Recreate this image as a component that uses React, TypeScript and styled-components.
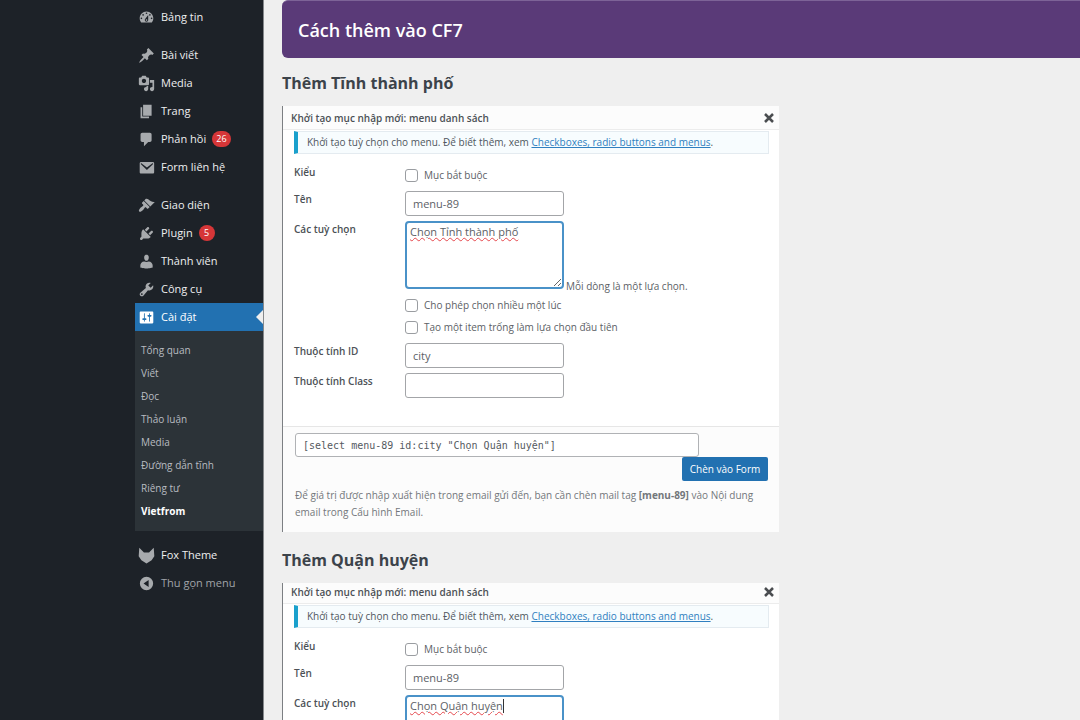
import React, { useId } from "react";
import styled, { createGlobalStyle, css } from "styled-components";

const GlobalStyle = createGlobalStyle`
  *, *::before, *::after { box-sizing: border-box; }
  body {
    margin: 0;
    background: #efefef;
    color: #50575e;
    font-family: "Open Sans", "Noto Sans", sans-serif;
    font-size: 10px;
    line-height: 16px;
  }
  h1, h2, h3, p, ul { margin: 0; padding: 0; }
  ul { list-style: none; }
`;

const Page = styled.div`
  display: flex;
  height: 100vh;
`;

/* ---------- Sidebar ---------- */

const Sidebar = styled.aside`
  flex: none;
  width: 264px;
  padding: 3px 0 0 135px;
  background: #1d2228;
  border-right: 1px solid #85888b;
`;

const Menu = styled.nav`
  display: flex;
  flex-direction: column;
  gap: 10px;
`;

const MenuLink = styled.a<{ $active?: boolean }>`
  position: relative;
  display: flex;
  align-items: center;
  gap: 6px;
  height: 28px;
  padding-left: 3px;
  color: #eeeff0;
  font-size: 11px;
  text-decoration: none;

  svg {
    flex: none;
    width: 17px;
    height: 17px;
    fill: #a7aaad;
  }

  ${(p) =>
    p.$active &&
    css`
      background: #2271b1;
      color: #fff;
      svg { fill: #fff; }
      &::after {
        content: "";
        position: absolute;
        right: 0;
        top: 7px;
        border: 7px solid transparent;
        border-left-width: 0;
        border-right-color: #efefef;
      }
    `}
`;

const CollapseButton = styled.button`
  display: flex;
  align-items: center;
  gap: 6px;
  width: 100%;
  height: 28px;
  padding: 0 0 0 3px;
  border: 0;
  background: none;
  color: #a0a4a8;
  font: inherit;
  font-size: 11px;

  svg {
    width: 17px;
    height: 17px;
    fill: #a7aaad;
  }
`;

const Badge = styled.span`
  min-width: 16px;
  height: 16px;
  padding: 0 4px;
  border-radius: 8px;
  background: #d63638;
  color: #fff;
  font-size: 9px;
  line-height: 16px;
  text-align: center;
`;

const Submenu = styled.ul`
  padding: 8px 0;
  background: #2c3338;
`;

const SubLink = styled.a<{ $current?: boolean }>`
  display: block;
  padding-left: 6px;
  color: ${(p) => (p.$current ? "#fff" : "#b8bcc0")};
  font-weight: ${(p) => (p.$current ? 700 : 400)};
  line-height: 23px;
  text-decoration: none;
`;

/* ---------- Content ---------- */

const Main = styled.main`
  flex: 1;
  min-width: 0;
  padding: 0 0 20px 18px;
  overflow-y: auto;
  scrollbar-width: none;
`;

const Banner = styled.header`
  padding: 16px 16px 14px;
  border-top: 1px solid #7d6397;
  border-radius: 6px 0 0 6px;
  background: #5a3a78;
`;

const BannerTitle = styled.h1`
  color: #fff;
  font-size: 18px;
  font-weight: 600;
  line-height: 27px;
`;

const Section = styled.section<{ $spaced?: boolean }>`
  display: flex;
  flex-direction: column;
  gap: 11px;
  max-width: 497px;
  padding-top: ${(p) => (p.$spaced ? 16 : 13)}px;
`;

const SectionTitle = styled.h2`
  color: #3c434a;
  font-size: 16px;
  font-weight: 700;
  line-height: 24px;
`;

const Panel = styled.div`
  border-left: 1px solid #7c7f83;
  background: #fff;
`;

const PanelHeader = styled.div<{ $compact?: boolean }>`
  display: flex;
  align-items: center;
  justify-content: space-between;
  height: ${(p) => (p.$compact ? 21 : 24)}px;
  padding: ${(p) => (p.$compact ? "0 5px 2px 8px" : "0 5px 0 8px")};
  border-bottom: 1px solid #ececec;
  background: #fcfcfc;
`;

const PanelTitle = styled.h3`
  color: #4c5156;
  font-size: 10px;
  font-weight: 600;
`;

const CloseButton = styled.button`
  display: flex;
  padding: 0;
  border: 0;
  background: none;

  svg {
    width: 10px;
    height: 10px;
    stroke: #4a4d50;
    stroke-width: 2.5;
  }
`;

const Notice = styled.p`
  margin: 1px 10px 0 11px;
  padding: 2px 9px;
  border: 1px solid #e4ebf0;
  border-left: 4px solid #1aa0cc;
  background: #f7fcfe;
  line-height: 17px;

  a { color: #2f7fc0; }
`;

const Fields = styled.div`
  display: flex;
  flex-direction: column;
  gap: 5px;
  padding: 10px 10px 28px 11px;
`;

const Field = styled.div`
  display: grid;
  grid-template-columns: 111px 1fr;
`;

const fieldLabel = css`
  color: #4c5156;
  font-weight: 600;
`;

const FieldLabel = styled.label`
  ${fieldLabel}
`;

const FieldCaption = styled.span`
  ${fieldLabel}
`;

const TextInput = styled.input`
  width: 159px;
  height: 25px;
  padding: 0 7px;
  border: 1px solid #a3a5a8;
  border-radius: 3px;
  background: #fff;
  color: #5c6166;
  font: inherit;
  font-size: 11px;
`;

const TextAreaLine = styled.div`
  display: flex;
  align-items: flex-end;
  gap: 2px;
  height: 73px;
`;

const TextAreaBox = styled.div`
  position: relative;
  align-self: flex-start;
`;

const TextArea = styled.textarea`
  display: block;
  width: 159px;
  height: 68px;
  padding: 1px 3px;
  border: 2px solid #4a92c8;
  border-radius: 4px;
  color: #5c6166;
  font: inherit;
  font-size: 11px;
  text-decoration: underline wavy 1px #e5484d;
  resize: both;
  outline: 0;
`;

const Caret = styled.span`
  position: absolute;
  top: 4px;
  left: 98px;
  width: 1px;
  height: 14px;
  background: #333;
`;

const Hint = styled.span`
  color: #5c6166;
`;

const CheckLabel = styled.label`
  display: flex;
  align-items: center;
  gap: 6px;
  height: 22px;
  color: #5c6166;
`;

const Checkbox = styled.input`
  appearance: none;
  width: 13px;
  height: 13px;
  margin: 0;
  border: 1px solid #9a9da1;
  border-radius: 3px;
  background: #fff;
`;

const PanelFooter = styled.div`
  display: flex;
  flex-direction: column;
  align-items: flex-start;
  padding: 6px 11px 11px 12px;
  border-top: 1px solid #e6e6e6;
  background: #fcfcfc;
`;

const TagInput = styled(TextInput)`
  width: 404px;
  max-width: 100%;
  height: 24px;
  border-color: #b0b2b5;
  color: #555a5f;
  font-family: "DejaVu Sans Mono", monospace;
  font-size: 10px;
`;

const InsertButton = styled.button`
  align-self: flex-end;
  width: 86px;
  height: 24px;
  padding: 0;
  border: 0;
  border-radius: 2px;
  background: #2271b1;
  color: #fff;
  font: inherit;
  white-space: nowrap;
`;

const MailNote = styled.p`
  padding-top: 6px;
  color: #73777b;
  line-height: 17px;
`;

/* ---------- Data ---------- */

const icons = {
  dashboard:
    "M3.76 16h12.48c1.1-1.37 1.76-3.11 1.76-5 0-4.42-3.58-8-8-8s-8 3.58-8 8c0 1.89.66 3.63 1.76 5zM10 4c.55 0 1 .45 1 1s-.45 1-1 1-1-.45-1-1 .45-1 1-1zM6 6c.55 0 1 .45 1 1s-.45 1-1 1-1-.45-1-1 .45-1 1-1zm8 0c.55 0 1 .45 1 1s-.45 1-1 1-1-.45-1-1 .45-1 1-1zm-5.37 5.55L12 7v6c0 1.1-.9 2-2 2s-2-.9-2-2c0-.57.24-1.08.63-1.45zM4 10c.55 0 1 .45 1 1s-.45 1-1 1-1-.45-1-1 .45-1 1-1zm12 0c.55 0 1 .45 1 1s-.45 1-1 1-1-.45-1-1 .45-1 1-1zm-5 3c0-.55-.45-1-1-1s-1 .45-1 1 .45 1 1 1 1-.45 1-1z",
  post: "M10.44 3.02l1.82-1.82 6.36 6.35-1.83 1.82c-1.05-.68-2.48-.57-3.41.36l-.75.75c-.92.93-1.04 2.35-.35 3.41l-1.83 1.82-2.41-2.41-2.8 2.79c-.42.42-3.38 2.71-3.8 2.29s1.86-3.39 2.28-3.81l2.79-2.79L4.1 9.36l1.83-1.82c1.05.69 2.48.57 3.4-.36l.75-.75c.93-.92 1.05-2.35.36-3.41z",
  media:
    "M13 11V4c0-.55-.45-1-1-1h-1.67L9 1H5L3.67 3H2c-.55 0-1 .45-1 1v7c0 .55.45 1 1 1h10c.55 0 1-.45 1-1zM7 4.5c1.38 0 2.5 1.12 2.5 2.5S8.38 9.5 7 9.5 4.5 8.38 4.5 7 5.62 4.5 7 4.5zM14 6h5v10.5c0 1.38-1.12 2.5-2.5 2.5S14 17.88 14 16.5s1.12-2.5 2.5-2.5c.17 0 .34.02.5.05V9h-3V6zm-4 8.05V13h2v3.5c0 1.38-1.12 2.5-2.5 2.5S7 17.88 7 16.5 8.12 14 9.5 14c.17 0 .34.02.5.05z",
  page: "M6 15V2h10v13H6zm-1 1h8v2H3V5h2v11z",
  comments:
    "M5 2h9c1.1 0 2 .9 2 2v7c0 1.1-.9 2-2 2h-2l-5 5v-5H5c-1.1 0-2-.9-2-2V4c0-1.1.9-2 2-2z",
  email:
    "M3.5 3.5h14c.8 0 1.5.7 1.500 1.500v10.500c0 .8-.7 1.500-1.500 1.500h-14c-.8 0-1.500-.7-1.500-1.500V5c0-.8.7-1.500 1.500-1.500zM4.300 5.200c-.6-.4-1.400.5-.8 1l7 6.600 7-6.600c.6-.5-.2-1.400-.8-1l-6.200 4.800z",
  appearance:
    "M14.48 11.06L7.41 3.99l1.5-1.5c.5-.56 2.3-.47 3.51.32 1.21.8 1.43 1.28 2.91 2.1 1.18.64 2.45 1.26 4.45.85zm-.71.71L6.7 4.7 4.93 6.47c-.39.39-.39 1.02 0 1.41l1.06 1.06c.39.39.39 1.03 0 1.42-.6.6-1.43 1.11-2.21 1.69-.35.26-.7.53-1.01.84C1.43 14.23.4 16.08 1.4 17.07c.99 1 2.84-.03 4.18-1.36.31-.31.58-.66.85-1.02.57-.78 1.08-1.61 1.69-2.21.39-.39 1.02-.39 1.41 0l1.06 1.06c.39.39 1.02.39 1.41 0z",
  plugins:
    "M13.11 4.36L9.87 7.6 8 5.73l3.24-3.24c.35-.34 1.05-.2 1.56.32.52.51.66 1.21.31 1.55zm-8 1.77l.91-1.12 9.01 9.01-1.19.84c-.71.71-2.63 1.16-3.82 1.16H6.14L4.9 17.26c-.59.59-1.54.59-2.12 0-.59-.58-.59-1.53 0-2.12l1.24-1.24v-3.88c0-1.13.4-3.19 1.09-3.89zm7.26 3.97l3.24-3.24c.34-.35 1.04-.21 1.55.31.52.51.66 1.21.31 1.55l-3.24 3.25z",
  users:
    "M10 9.25c-2.27 0-2.73-3.44-2.73-3.44C7 4.02 7.82 2 9.97 2c2.16 0 2.98 2.02 2.71 3.81 0 0-.41 3.44-2.68 3.44zM7.23 9.97L10 10.600L12.72 9.97c2.39 0 4.52 2.33 4.52 4.53v2.49s-3.65 1.13-7.24 1.13c-3.65 0-7.24-1.13-7.24-1.13v-2.49c0-2.25 1.94-4.48 4.47-4.53z",
  tools:
    "M16.68 9.77c-1.34 1.34-3.3 1.67-4.95.99l-5.41 6.52c-.99.99-2.59.99-3.58 0s-.99-2.59 0-3.57l6.52-5.42c-.68-1.65-.35-3.61.99-4.95 1.28-1.28 3.12-1.62 4.72-1.06l-2.89 2.89 2.82 2.82 2.86-2.87c.53 1.58.18 3.39-1.08 4.65zM3.81 16.21c.4.39 1.04.39 1.43 0 .4-.4.4-1.04 0-1.43-.39-.4-1.03-.4-1.43 0-.39.39-.39 1.03 0 1.43z",
  settings:
    "M18 16V4c0-.55-.45-1-1-1H3c-.55 0-1 .45-1 1v12c0 .55.45 1 1 1h14c.55 0 1-.45 1-1zM8 11h1c.55 0 1 .45 1 1s-.45 1-1 1H8v1.5c0 .28-.22.5-.5.5s-.5-.22-.5-.5V13H6c-.55 0-1-.45-1-1s.45-1 1-1h1V5.5c0-.28.22-.5.5-.5s.5.22.5.5V11zm5-2h-1c-.55 0-1-.45-1-1s.45-1 1-1h1V5.5c0-.28.22-.5.5-.5s.5.22.5.5V7h1c.55 0 1 .45 1 1s-.45 1-1 1h-1v5.5c0 .28-.22.5-.5.5s-.5-.22-.5-.5V9z",
  fox: "M1.500 1L7 6.500h6L18.500 1l.7 10-3.200 4.500L10 19.500l-6-4L.8 11z",
  collapse:
    "M10 2.200a7.800 7.800 0 1 0 0 15.600a7.800 7.800 0 1 0 0-15.600zM12.500 6v8L6.500 10z",
};

type IconName = keyof typeof icons;

const Icon = ({ name }: { name: IconName }) => (
  <svg viewBox="0 0 20 20" fillRule="evenodd" aria-hidden="true">
    <path d={icons[name]} />
  </svg>
);

type Item = { icon: IconName; label: string; count?: number; active?: boolean };

const home: Item[] = [{ icon: "dashboard", label: "Bảng tin" }];
const content: Item[] = [
  { icon: "post", label: "Bài viết" },
  { icon: "media", label: "Media" },
  { icon: "page", label: "Trang" },
  { icon: "comments", label: "Phản hồi", count: 26 },
  { icon: "email", label: "Form liên hệ" },
];
const admin: Item[] = [
  { icon: "appearance", label: "Giao diện" },
  { icon: "plugins", label: "Plugin", count: 5 },
  { icon: "users", label: "Thành viên" },
  { icon: "tools", label: "Công cụ" },
  { icon: "settings", label: "Cài đặt", active: true },
];
const settings = [
  "Tổng quan",
  "Viết",
  "Đọc",
  "Thảo luận",
  "Media",
  "Đường dẫn tĩnh",
  "Riêng tư",
  "Vietfrom",
];

const MenuItem = ({ item }: { item: Item }) => (
  <li>
    <MenuLink href="#" $active={item.active}>
      <Icon name={item.icon} />
      {item.label}
      {item.count && <Badge>{item.count}</Badge>}
    </MenuLink>
    {item.active && (
      <Submenu>
        {settings.map((label) => (
          <li key={label}>
            <SubLink href="#" $current={label === "Vietfrom"}>
              {label}
            </SubLink>
          </li>
        ))}
      </Submenu>
    )}
  </li>
);

const MenuGroup = ({ items }: { items: Item[] }) => (
  <ul>
    {items.map((item) => (
      <MenuItem key={item.label} item={item} />
    ))}
  </ul>
);

type TagPanelProps = {
  options: string;
  elementId: string;
  compact?: boolean;
  caret?: boolean;
};

const TagPanel = ({ options, elementId, compact, caret }: TagPanelProps) => {
  const id = useId();
  return (
    <Panel>
      <PanelHeader $compact={compact}>
        <PanelTitle>Khởi tạo mục nhập mới: menu danh sách</PanelTitle>
        <CloseButton type="button" aria-label="Đóng">
          <svg viewBox="0 0 10 10" aria-hidden="true">
            <path d="M1 1l8 8M9 1l-8 8" />
          </svg>
        </CloseButton>
      </PanelHeader>
      <Notice>
        Khởi tạo tuỳ chọn cho menu. Để biết thêm, xem{" "}
        <a href="#">Checkboxes, radio buttons and menus</a>.
      </Notice>
      <Fields>
        <Field>
          <FieldCaption>Kiểu</FieldCaption>
          <CheckLabel>
            <Checkbox type="checkbox" />
            Mục bắt buộc
          </CheckLabel>
        </Field>
        <Field>
          <FieldLabel htmlFor={`${id}-name`}>Tên</FieldLabel>
          <TextInput id={`${id}-name`} defaultValue="menu-89" />
        </Field>
        <Field>
          <FieldLabel htmlFor={`${id}-options`}>Các tuỳ chọn</FieldLabel>
          <div>
            <TextAreaLine>
              <TextAreaBox>
                <TextArea
                  id={`${id}-options`}
                  spellCheck={false}
                  defaultValue={options}
                />
                {caret && <Caret />}
              </TextAreaBox>
              <Hint>Mỗi dòng là một lựa chọn.</Hint>
            </TextAreaLine>
            <CheckLabel>
              <Checkbox type="checkbox" />
              Cho phép chọn nhiều một lúc
            </CheckLabel>
            <CheckLabel>
              <Checkbox type="checkbox" />
              Tạo một item trống làm lựa chọn đầu tiên
            </CheckLabel>
          </div>
        </Field>
        <Field>
          <FieldLabel htmlFor={`${id}-id`}>Thuộc tính ID</FieldLabel>
          <TextInput id={`${id}-id`} defaultValue={elementId} />
        </Field>
        <Field>
          <FieldLabel htmlFor={`${id}-class`}>Thuộc tính Class</FieldLabel>
          <TextInput id={`${id}-class`} />
        </Field>
      </Fields>
      <PanelFooter>
        <TagInput
          readOnly
          aria-label="Shortcode"
          value={`[select menu-89 id:${elementId} "Chọn Quận huyện"]`}
        />
        <InsertButton type="button">Chèn vào Form</InsertButton>
        <MailNote>
          Để giá trị được nhập xuất hiện trong email gửi đến, bạn cần chèn mail
          tag <strong>[menu-89]</strong> vào Nội dung email trong Cấu hình
          Email.
        </MailNote>
      </PanelFooter>
    </Panel>
  );
};

export default function App() {
  return (
    <Page>
      <GlobalStyle />
      <Sidebar>
        <Menu>
          <MenuGroup items={home} />
          <MenuGroup items={content} />
          <MenuGroup items={admin} />
          <ul>
            <MenuItem item={{ icon: "fox", label: "Fox Theme" }} />
            <li>
              <CollapseButton type="button">
                <Icon name="collapse" />
                Thu gọn menu
              </CollapseButton>
            </li>
          </ul>
        </Menu>
      </Sidebar>
      <Main>
        <Banner>
          <BannerTitle>Cách thêm vào CF7</BannerTitle>
        </Banner>
        <Section>
          <SectionTitle>Thêm Tĩnh thành phố</SectionTitle>
          <TagPanel options="Chọn Tỉnh thành phố" elementId="city" />
        </Section>
        <Section $spaced>
          <SectionTitle>Thêm Quận huyện</SectionTitle>
          <TagPanel
            options="Chọn Quận huyện"
            elementId="district"
            compact
            caret
          />
        </Section>
      </Main>
    </Page>
  );
}
